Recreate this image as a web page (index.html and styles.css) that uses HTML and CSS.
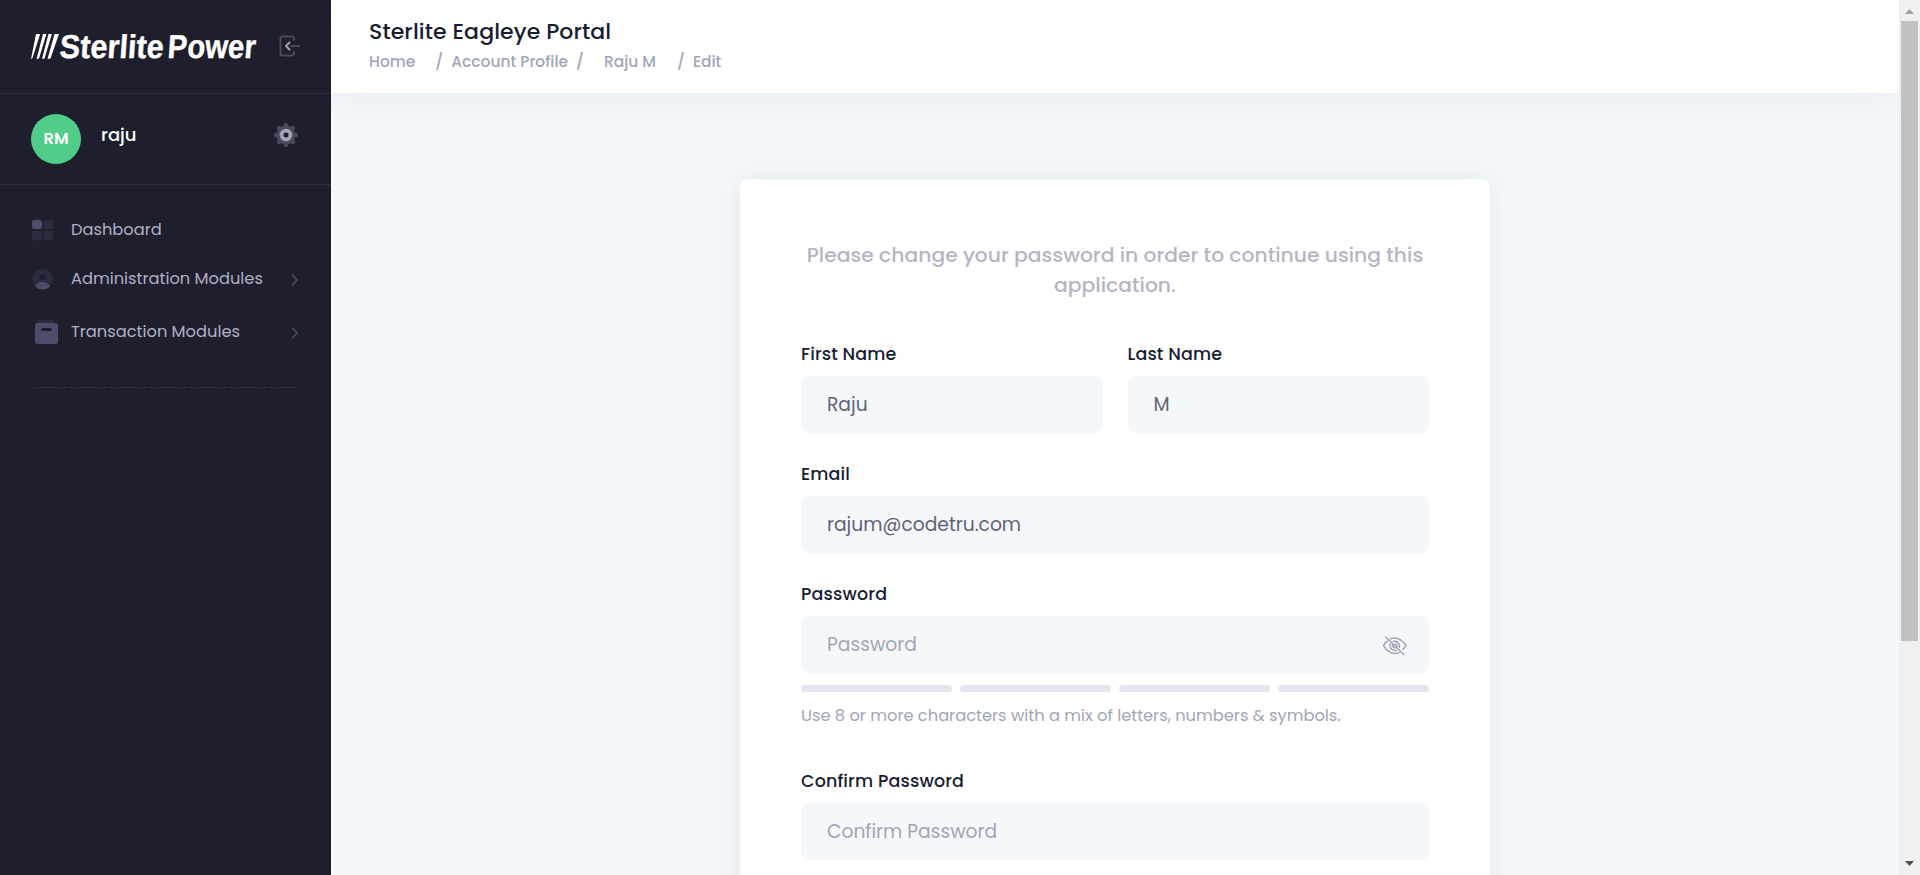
FILE: index.html
```html
<!DOCTYPE html>
<html lang="en">
<head>
<meta charset="utf-8">
<title>Sterlite Eagleye Portal</title>
<link rel="stylesheet" href="styles.css">
</head>
<body>
<div class="app">
  <aside class="sidebar">
    <div class="brand">
      <svg class="logo" width="226" height="30" viewBox="0 0 226 30" role="img" aria-label="SterlitePower">
        <g fill="#fff">
          <path d="M0 28L5 3h4.200L1.500 27zM5.500 28L12 3h3.400L8 27.500zM11 28L17.500 3h3.400L13.500 27.500zM16.500 28L23.500 3h4.500L19.500 27.500z"/>
          <g transform="skewX(-4)" class="logo-text">
            <text x="30" y="27" textLength="104" lengthAdjust="spacingAndGlyphs">Sterlite</text>
            <text x="138" y="27" textLength="88" lengthAdjust="spacingAndGlyphs">Power</text>
          </g>
        </g>
      </svg>
      <svg class="toggle" width="22" height="22" viewBox="0 0 22 22" fill="none" stroke-width="2" stroke-linecap="round" stroke-linejoin="round">
        <path d="M15 5V3.500Q15 1.500 13 1.500H3.500Q1.500 1.500 1.500 3.500V18.500Q1.500 20.500 3.500 20.500H13Q15 20.500 15 18.500V17M12 11H20" stroke="#4a4958"/>
        <path d="M10.500 7.500L7 11l3.500 3.500" stroke="#a1a0b2"/>
      </svg>
    </div>
    <div class="user">
      <div class="avatar">RM</div>
      <div class="user-name">raju</div>
      <svg class="gear" width="26" height="26" viewBox="-13 -13 26 26">
        <circle r="9.500" fill="#4a4a5c"/>
        <g stroke="#4a4a5c" stroke-width="4.500" stroke-linecap="round"><path d="M0-9.800V9.800M-9.800 0H9.800M-7-7L7 7M-7 7L7-7"/></g>
        <circle r="4.400" fill="#1e1e2d" stroke="#a1a1b7" stroke-width="3.800"/>
      </svg>
    </div>
    <nav class="menu">
      <a class="item">
        <svg width="24" height="24" viewBox="0 0 24 24"><rect x="0" y="2" width="10" height="9" rx="2" fill="#4c4c6b"/><g fill="#2b2b40"><rect x="11.500" y="2" width="9.500" height="9" rx="2"/><rect x="0" y="13" width="10" height="9.500" rx="2"/><rect x="11.500" y="13" width="9.500" height="9.500" rx="2"/></g></svg>
        <span class="item-text">Dashboard</span>
      </a>
      <a class="item admin">
        <svg width="24" height="24" viewBox="0 0 24 24"><circle cx="10.500" cy="12" r="10.400" fill="#2b2b40"/><path d="M3 19.500Q5 15 10.500 15T18 19.500Q15 22.400 10.500 22.400T3 19.500z" fill="#4c4c6b"/><circle cx="10.500" cy="10" r="3.100" fill="#1e1e2d"/></svg>
        <span class="item-text">Administration Modules</span>
        <svg class="chev" width="8" height="14" viewBox="0 0 8 14"><path d="M1.500 2L6 7l-4.500 5" /></svg>
      </a>
      <a class="item trans">
        <svg width="27" height="26" viewBox="0 0 27 26"><path d="M6 1H21l2 5H4z" fill="#2b2b40"/><rect x="3" y="4" width="23" height="21" rx="2.500" fill="#4c4c6b"/><rect x="9" y="9" width="11" height="3" rx="1.500" fill="#1e1e2d"/></svg>
        <span class="item-text">Transaction Modules</span>
        <svg class="chev" width="8" height="14" viewBox="0 0 8 14"><path d="M1.500 2L6 7l-4.500 5" /></svg>
      </a>
      <div class="rule"></div>
    </nav>
  </aside>
  <div class="main">
    <header class="topbar">
      <h1>Sterlite Eagleye Portal</h1>
      <div class="crumbs"><span>Home</span><span class="slash wide">/</span><span>Account Profile</span><span class="slash near">/</span><span class="person">Raju M</span><span class="slash wide">/</span><span>Edit</span></div>
    </header>
    <main class="content">
      <form class="card">
        <p class="lead">Please change your password in order to continue using this<br>application.</p>
        <div class="names">
          <div class="field"><label>First Name</label><div class="input"><span>Raju</span></div></div>
          <div class="field"><label>Last Name</label><div class="input"><span>M</span></div></div>
        </div>
        <div class="field"><label>Email</label><div class="input"><span>rajum@codetru.com</span></div></div>
        <div class="field pass"><label>Password</label>
          <div class="input empty"><span>Password</span>
            <svg class="eye" width="26" height="20" viewBox="0 0 26 20"><path d="M8.500 2.900Q17 -.5 24 9.600Q22.600 11.800 20.800 13.500M17 16.600Q8 20 1.500 9.600Q3 7 5.200 5.200M11.300 5.300Q15.500 4.400 17.300 8.500Q17.700 10 17.300 11.300M14.500 14.300Q10 15 8.300 11Q7.900 9.500 8.400 7.900M13.300 7.900Q14.900 8.300 15 9.900M10.700 9Q10.700 11.500 12.600 11.900M3.700 1L21.700 18.500"/></svg>
          </div>
          <div class="meter"><i></i><i></i><i></i><i></i></div>
          <div class="hint">Use 8 or more characters with a mix of letters, numbers &amp; symbols.</div>
        </div>
        <div class="field"><label>Confirm Password</label><div class="input empty"><span>Confirm Password</span></div></div>
      </form>
    </main>
  </div>
  <div class="scrollbar">
    <svg width="9" height="5" viewBox="0 0 9 5"><path d="M0 5L4.500 0L9 5z" fill="#a0a0a0"/></svg>
    <div class="thumb"></div>
    <svg class="down" width="9" height="5" viewBox="0 0 9 5"><path d="M0 0L4.500 5L9 0z" fill="#505050"/></svg>
  </div>
</div>
</body>
</html>
```
FILE: styles.css
```css
* { box-sizing: border-box; }
body { margin: 0; font-family: Poppins, Inter, "Noto Sans", sans-serif; overflow: hidden; }
.app { display: flex; height: 875px; overflow: hidden; background: #f3f8fb; }
svg { display: block; flex: none; }

.sidebar { width: 331px; flex: none; background: #1e1e2d; }
.brand { height: 94px; padding: 31px 30px 0 31px; display: flex; justify-content: space-between; border-bottom: 1px solid #2d2d43; }
.logo { overflow: visible; }
.logo-text { font: bold 33px "Liberation Sans", sans-serif; stroke: #fff; stroke-width: .4; }
.toggle { margin-top: 4px; }
.user { height: 91px; padding: 20px 31px 0; display: flex; border-bottom: 1px solid #2d2d43; }
.avatar { width: 50px; height: 50px; border-radius: 50%; background: #50cd89; color: #fff; font-size: 16.250px; font-weight: 600; line-height: 50px; text-align: center; }
.user-name { flex: 1; padding-left: 20px; color: #fff; font-size: 18px; font-weight: 500; line-height: 42px; }
.gear { margin: 8px 1px 0 0; }
.menu { padding: 32px 32px 0; }
.item { display: flex; align-items: center; height: 26px; color: #b0b1c5; font-size: 16.250px; line-height: 24px; }
.item-text { padding-left: 15px; white-space: nowrap; }
.admin { margin-top: 23px; }
.trans { margin-top: 27px; }
.trans .item-text { padding-left: 12px; }
.chev { margin: 2px 0 0 auto; fill: none; stroke: #4c4c6b; stroke-width: 1.500; stroke-linecap: round; }
.rule { margin: 42px 2px 0; border-top: 1px dashed #323241; }

.main { flex: 1; min-width: 0; }
.topbar { height: 93px; padding: 16px 38px 0; background: #fff; box-shadow: 0 10px 30px 0 rgba(82, 63, 105, .05); }
h1 { margin: 0; font-size: 22px; font-weight: 500; line-height: 32px; letter-spacing: .1px; color: #181c32; }
.crumbs { display: flex; font-size: 15.440px; font-weight: 500; line-height: 28px; color: #a1a5b7; white-space: nowrap; }
.slash { width: 7px; text-align: center; }
.wide { margin: 0 9px 0 20px; }
.near { margin: 0 21px 0 8px; }
.person { margin-right: 1px; }
.content { padding: 86px 0 0; display: flex; justify-content: center; }
.card { width: 750px; height: 900px; padding: 61px; border-radius: 8px; background: #fff; box-shadow: 0 0 26px rgba(0, 0, 0, .07); }
.lead { margin: 0 -10px 35px; font-size: 20.310px; font-weight: 500; line-height: 30px; text-align: center; color: #b5b5c3; }
.names { display: grid; grid-template-columns: 1fr 1fr; gap: 25px; }
.field { height: 120px; }
.pass { height: 187px; }
label { display: block; height: 41px; padding-top: 6px; font-size: 17.470px; font-weight: 500; line-height: 26px; letter-spacing: .15px; color: #181c32; }
.input { display: flex; align-items: center; justify-content: space-between; height: 57px; padding: 0 21px 0 26px; border-radius: 8px; background: #f5f8fa; color: #5e6278; font-size: 18.690px; }
.empty { color: #a1a5b7; }
.eye { margin-top: 2px; fill: none; stroke: #a1a5b7; stroke-width: 1.500; stroke-linecap: round; }
.meter { display: grid; grid-template-columns: repeat(4, 1fr); gap: 8px; margin-top: 12px; }
.meter i { height: 7px; border-radius: 4px; background: #e4e6ef; }
.hint { margin-top: 11px; font-size: 16.250px; line-height: 26px; color: #a1a5b7; }

.scrollbar { width: 21px; flex: none; background: #f0f0f0; display: flex; flex-direction: column; align-items: center; padding: 9px 0; }
.thumb { width: 17px; height: 620px; margin-top: 7px; background: #c1c1c1; }
.down { margin-top: auto; }
```
